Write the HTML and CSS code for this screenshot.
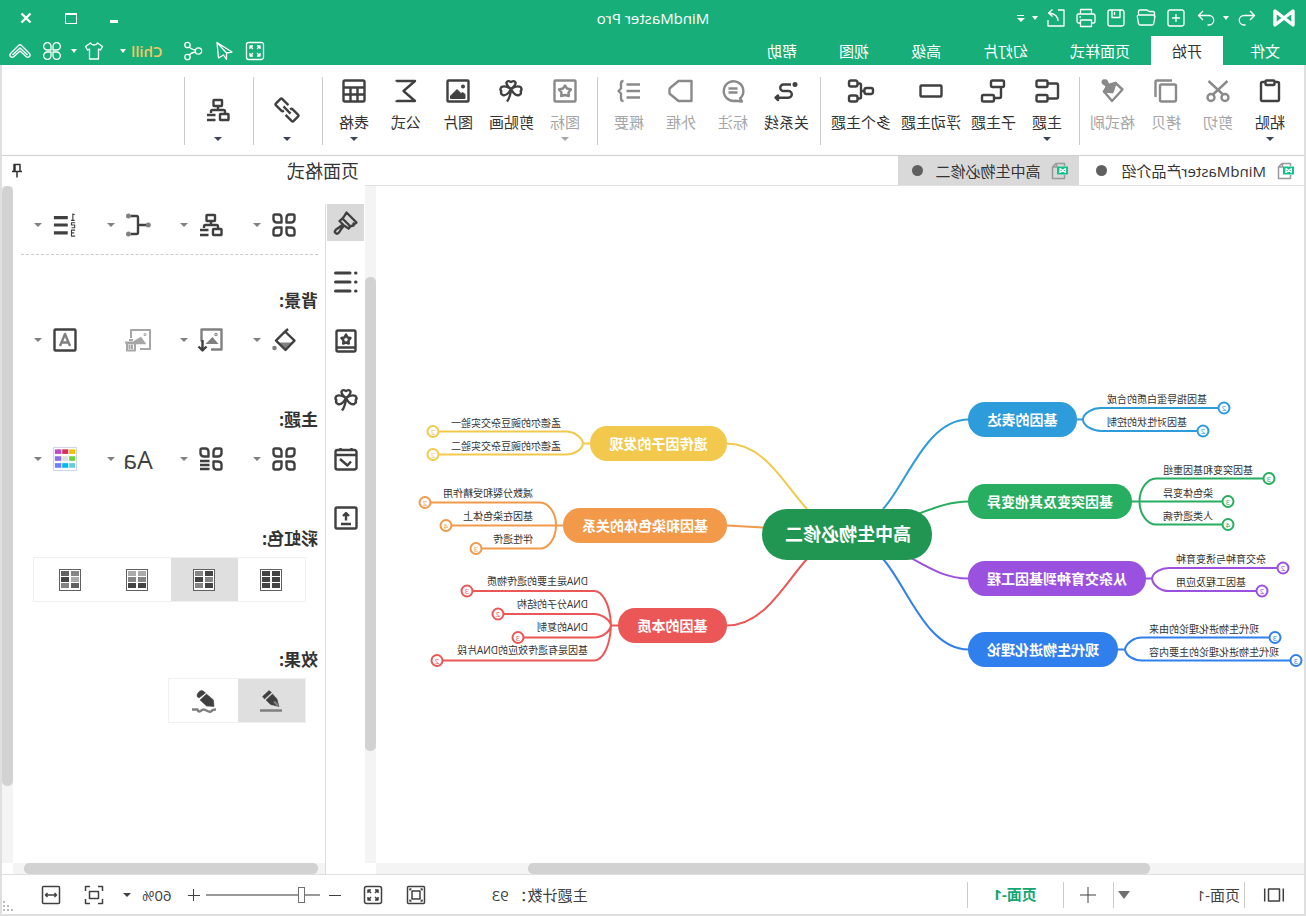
FILE: index.html
```html
<!DOCTYPE html>
<html lang="zh-CN">
<head>
<meta charset="utf-8">
<title>MindMaster Pro</title>
<link rel="stylesheet" href="styles.css">
</head>
<body>
<svg class="sprite" aria-hidden="true">
  <symbol id="logo" viewBox="0 0 22 18"><path d="M2 2v14L20 2v14z" fill="none" stroke="currentColor" stroke-width="3.400" stroke-linejoin="round" stroke-linecap="round"/></symbol>
  <symbol id="undo" viewBox="0 0 20 20"><path d="M7 3L2.500 7.500 7 12M3 7.500h10a4.500 4.500 0 0 1 0 9.500h-1.500"/></symbol>
  <symbol id="redo" viewBox="0 0 20 20"><path d="M13 3l4.500 4.500L13 12M17 7.500H7A4.500 4.500 0 0 0 7 17h1.500"/></symbol>
  <symbol id="new" viewBox="0 0 20 20"><rect x="2" y="2" width="16" height="16" rx="2"/><path d="M10 6v8M6 10h8"/></symbol>
  <symbol id="open" viewBox="0 0 20 20"><path d="M1.500 10V5q0-1.500 1.500-1.500h4l2-1.500h7q1.500 0 1.500 1.500V7M2.500 7H17q2 0 1.700 1.500l-1.200 7q-.3 1.500-2 1.500H4q-1.500 0-1.700-1.500L1 8.500Q1 7 2.500 7z"/></symbol>
  <symbol id="save" viewBox="0 0 20 20"><rect x="2" y="2" width="16" height="16" rx="2"/><path d="M6 2v7.500h8V2M11.500 4v3"/></symbol>
  <symbol id="print" viewBox="0 0 20 20"><path d="M4.500 6V1.500h11V6M4.500 15H2.500Q1 15 1 13.500v-6Q1 6 2.500 6h15Q19 6 19 7.500v6q0 1.500-1.500 1.500h-2M4.500 12h11v6.500h-11zM15 9h1.500"/></symbol>
  <symbol id="export" viewBox="0 0 20 20"><path d="M8 2H2v16h16v-6M8 13q0-7 9-8M13.500 1.500L17.500 5l-4 3.500"/></symbol>
  <symbol id="full" viewBox="0 0 20 20"><rect x="1.500" y="1.500" width="17" height="17" rx="2"/><path d="M5 8V5h3M12 5h3v3M15 12v3h-3M8 15H5v-3M5 5l3 3M15 5l-3 3M15 15l-3-3M5 15l3-3"/></symbol>
  <symbol id="send" viewBox="0 0 20 20"><path d="M17 1.500L2 11l5.500 1v6.500l3-4.500 5 3zM17 1.500L7.500 12"/></symbol>
  <symbol id="share" viewBox="0 0 20 20"><circle cx="4.500" cy="10" r="3.200"/><circle cx="15.500" cy="4" r="2.700"/><circle cx="15.500" cy="16" r="2.700"/><path d="M7.500 9q5-1 6-3M7.500 11q5 1 6 3"/></symbol>
  <symbol id="shirt" viewBox="0 0 20 20"><path d="M6.500 2L1.500 5.500 3.500 9 5.500 8v10h9V8l2 1 2-3.500L13.500 2q-1 2-3.500 2T6.500 2z"/></symbol>
  <symbol id="four" viewBox="0 0 20 20"><path d="M9 9H5.500A3.700 3.700 0 1 1 9 5.500zM11 9h3.500A3.700 3.700 0 1 0 11 5.500zM9 11H5.500A3.700 3.700 0 1 0 9 14.500zM11 11h3.500a3.700 3.700 0 1 1-3.500 3.500z"/></symbol>
  <symbol id="fold" viewBox="0 0 22 16"><path d="M2 10l7.500-7.500q1.500-1.500 3 0L20 10q2 2 .5 3.500t-3.500 0L11 8l-6 5.500q-2 1.500-3.500 0T2 10zM3.500 12L11 5l7.500 7"/></symbol>

  <symbol id="paste" viewBox="0 0 24 24"><path d="M8 3H4.500Q3 3 3 4.500v16Q3 22 4.500 22h15q1.500 0 1.500-1.500v-16Q21 3 19.500 3H16"/><rect x="7.500" y="1.500" width="9" height="4.500" rx="1"/></symbol>
  <symbol id="cut" viewBox="0 0 24 24"><circle cx="5" cy="18.500" r="3.500"/><circle cx="19" cy="18.500" r="3.500"/><path d="M2.500 2L17 15.500M21.500 2L7 15.500"/></symbol>
  <symbol id="copy" viewBox="0 0 24 24"><rect x="2" y="5.500" width="16" height="17" rx="1.500"/><path d="M22.500 18V3q0-1.500-1.500-1.500H6"/></symbol>
  <symbol id="painter" viewBox="0 0 24 24"><path d="M8.500 4L1.500 10.500 12 22l8-9.500z"/><path class="solid" d="M8.500 4l3 9 8.500-.5-3-5.500 4-3q1-2-1-2.500t-2.500.5l-2 4z"/></symbol>
  <symbol id="topic" viewBox="0 0 24 24"><rect x="11.500" y="1.500" width="11" height="6.500" rx="1.500"/><rect x="11.500" y="16" width="11" height="6.500" rx="1.500"/><path d="M11.500 4.500H2.500Q1 4.500 1 6v12q0 1.500 1.500 1.500h9"/></symbol>
  <symbol id="subtopic" viewBox="0 0 24 24"><rect x="1" y="1.500" width="13" height="6.500" rx="1.500"/><rect x="11" y="16" width="12" height="6.500" rx="1.500"/><path d="M4 8v9.500q0 1.500 1.500 1.500H11"/></symbol>
  <symbol id="float" viewBox="0 0 24 24"><rect x="1.500" y="6.500" width="21" height="11" rx="1"/></symbol>
  <symbol id="multi" viewBox="0 0 26 24"><rect x="1" y="9" width="8.500" height="6" rx="2"/><rect x="16.500" y="1.500" width="8.500" height="6" rx="2"/><rect x="16.500" y="16.500" width="8.500" height="6" rx="2"/><path d="M9.500 12H13M16.500 4.500h-2Q13 4.500 13 6v12q0 1.500 1.500 1.500h2"/></symbol>
  <symbol id="relation" viewBox="0 0 24 24"><path d="M7 5.500h7.500a3.200 3.200 0 0 1 0 6.500h-5a3.300 3.300 0 0 0 0 6.700H19"/><circle class="solid" cx="3" cy="5.500" r="1.300"/><path class="solid" d="M20 16.500v4.500l2.500-2.300z"/></symbol>
  <symbol id="note" viewBox="0 0 24 24"><path d="M5 19.500A9.800 9.800 0 1 1 10 21.800L3 22.500z"/><path d="M7.500 9.500h9M7.500 13.500h9"/></symbol>
  <symbol id="frame" viewBox="0 0 24 24"><path d="M1.500 2h13l8.500 7q.5.500.5 1v4q0 .5-.5 1l-8.500 7h-13z"/></symbol>
  <symbol id="summary" viewBox="0 0 24 24"><path d="M1 5.500h13.500M1 12h13.500M1 18.500h13.500M17.500 2q2.500 0 2.500 2.500v5L22.500 12 20 14.500v5q0 2.500-2.500 2.500"/></symbol>
  <symbol id="stamp" viewBox="0 0 24 24"><rect x="1.500" y="1.500" width="21" height="21" rx="1"/><path d="M12 6.500l2 3 4 1-2.500 3 .3 3.500-3.800-1-3.800 1 .3-3.500L6 10.500l4-1z"/></symbol>
  <symbol id="clover" viewBox="0 0 24 24"><path d="M12 10Q7 6 7.500 3.500 8.500 1 12 3q3.500-2 4.500.5Q17 6 12 10zM12 10q6-4 9.500-2 2 2.500.2 4 1 3-1.500 4Q16 17.500 12 10zM12 10Q6 6 2.500 8q-2 2.500-.2 4-1 3 1.500 4Q8 17.500 12 10zM12 10q.5 8 4 12.500"/></symbol>
  <symbol id="picture" viewBox="0 0 24 24"><rect x="1.500" y="1.500" width="21" height="21" rx="1"/><path class="solid" d="M5 19.500v-4l2-2 2 1 4-4 6.500 6.500v2.500z" stroke-width="1"/><circle class="solid" cx="7" cy="7.500" r=".8"/></symbol>
  <symbol id="sigma" viewBox="0 0 24 24"><path d="M21.500 2.500V2H3l11.500 10L3 22h18.500v-.5"/></symbol>
  <symbol id="table" viewBox="0 0 24 24"><rect x="1.500" y="1.500" width="21" height="21" rx="1.500"/><path d="M2 8.500h20M2 15.500h20M8.500 8.500V22M15.500 8.500V22"/></symbol>
  <symbol id="link" viewBox="0 0 24 24"><g transform="rotate(-45 12 12)"><path d="M9.500 16.500H1q-1.500 0-1.500-1.500V9Q-.5 7.500 1 7.500h7.500q1.500 0 1.500 2M14.500 7.500H23q1.500 0 1.500 1.500v6q0 1.500-1.500 1.500h-7.500q-1.500 0-1.500-2M7 12h10"/></g></symbol>
  <symbol id="tree" viewBox="0 0 24 24"><rect x="8" y="2" width="8.500" height="6" rx=".5"/><path d="M12 8V12M5 15v-1.500Q5 12 6.500 12h11q1.500 0 1.500 1.500V15M14.500 17H23M14.500 22H23"/><rect x="1.500" y="16" width="8.500" height="6" rx=".5"/></symbol>

  <symbol id="leaves" viewBox="0 0 24 24"><path d="M1.500 3q0-1.500 1.500-1.500h4Q9.500 2 9.500 5v4.500H5Q2 9.500 1.500 6.500zM22.500 3q0-1.500-1.500-1.500h-4q-2.500.5-2.500 3.500v4.500H19q3 0 3.500-3zM1.500 17q.5-2.500 3.500-2.500h4.500V19q0 3-2.500 3.500H3Q1.500 22.500 1.500 21zM22.500 17q-.5-2.500-3.500-2.500h-4.500V19q0 3 2.500 3.500h4q1.500 0 1.500-1.500z"/></symbol>
  <symbol id="leaves3" viewBox="0 0 24 24"><path d="M1.500 3q0-1.500 1.500-1.500h4Q9.500 2 9.500 5v4.500H5Q2 9.500 1.500 6.500zM22.500 3q0-1.500-1.500-1.500h-4q-2.500.5-2.500 3.500v4.500H19q3 0 3.500-3zM1.500 17q.5-2.500 3.500-2.500h4.500V19q0 3-2.500 3.500H3Q1.500 22.500 1.500 21zM13.500 14H23M13.500 18H23M13.500 22H23"/></symbol>
  <symbol id="bracket" viewBox="0 0 26 24"><path d="M4 12h8M20 3h-5.500Q13 3 13 4.500v15q0 1.500 1.500 1.500H20"/><g class="dim"><circle class="dimdot" cx="2.700" cy="12" r="2.500"/><circle class="dimdot" cx="22.500" cy="3" r="2.500"/><circle class="dimdot" cx="22.500" cy="21" r="2.500"/></g></symbol>
  <symbol id="numbers" viewBox="0 0 26 26"><path d="M10 5h15M10 13h15M10 21.500h15" stroke-width="3.500"/><path d="M2.500 2L4.500 1v6.500M2.500 8h4M2 10.500h4v2.500H2.500v3H6M2 18.500h4v6.500H2M3 21.500h3" stroke-width="1.200"/></symbol>
  <symbol id="bucket" viewBox="0 0 24 24"><path class="dimfill" d="M3.500 14.500h14.500l-7 7.500z"/><path d="M8 1l5 4.500M11 3.500l9 9.200-9.500 9.300-9-9.300z"/><circle class="dimfill" cx="21.500" cy="20" r="2.300"/></symbol>
  <symbol id="import" viewBox="0 0 26 24"><g class="dim"><path d="M13 21.500H2.500v-20h20v12"/><path class="dimfill" d="M5.500 16l6-7 7 7z"/><circle cx="8" cy="6.500" r=".5"/></g><path d="M21.500 12v10M17.500 18.500l4 4 4-4"/></symbol>
  <symbol id="clear" viewBox="0 0 28 24"><path d="M12 21H2V2h19v8"/><path class="solid" d="M6 16l5-7 7 4v3z" stroke-width=".5"/><circle cx="7" cy="6.500" r=".5"/><path d="M15 14.500h12M19 12h4M17 15.500h8v7h-8zM20 17v4M22.500 17v4"/></symbol>
  <symbol id="letter" viewBox="0 0 24 24"><rect x="1.500" y="1.500" width="21" height="21" rx="1"/><path class="dim" d="M7 18l5-12 5 12M9 14.500h6"/></symbol>
  <symbol id="palette" viewBox="0 0 26 26"><path d="M.5.500h25v25H.5z" fill="#fff" stroke="#c9cfe4" stroke-width="1"/><g stroke="none"><path fill="#f2c200" d="M2 2.500h6.500v5H2z"/><path fill="#db2d55" d="M9.500 2.500H16v5H9.500z"/><path fill="#c24bc8" d="M17 2.500h7v5h-7z"/><path fill="#6fcf3f" d="M2 10h6.500v5H2z"/><path fill="#ddd" d="M9.500 10H16v5H9.500z"/><path fill="#8f6ee8" d="M17 10h7v5h-7z"/><path fill="#64cdd8" d="M2 17.500h6.500v5H2z"/><path fill="#00b8f5" d="M9.500 17.500H16v5H9.500z"/><path fill="#6f80ff" d="M17 17.500h7v5h-7z"/></g></symbol>
  <symbol id="brush" viewBox="0 0 24 24"><path d="M11.500 1.500L1.500 11.500l2 1.500 1-.5v2q3 0 5 3L14 14.500q3 3.500 5 7 2 2 3.500.5t-.5-3.500q-3.500-2-7-5l3.500-3.500q-3.500-2-7-8.500zM15.500 7.500l-8 8"/></symbol>
  <symbol id="list" viewBox="0 0 24 24"><path d="M8 3h14.500M8 12h14.500M8 21h14.500" stroke-width="3" stroke-linecap="round"/><path d="M2 3h.5M2 12h.5M2 21h.5" stroke-width="3" stroke-linecap="round"/></symbol>
  <symbol id="book" viewBox="0 0 24 24"><rect x="2.500" y="1.500" width="19" height="21" rx="1.500"/><path d="M2.500 18.500h19M12 5.500l1.500 3 3 .5-2 2.500.3 3-2.800-1-2.800 1 .3-3L7.500 9l3-.5z"/></symbol>
  <symbol id="calendar" viewBox="0 0 24 24"><rect x="1.500" y="3" width="21" height="19.500" rx="2"/><path d="M1.500 8h21M6.500 1v3M17.500 1v3M7 14.500l3.500 4 7.500-6.500"/></symbol>
  <symbol id="upload" viewBox="0 0 24 24"><rect x="1.500" y="1.500" width="21" height="21" rx="1.500"/><path d="M7 18h10M12 14.500V8M9 10l3-3 3 3"/></symbol>
  <symbol id="pen" viewBox="0 0 24 24"><path class="solid" d="M14 1.500l6.500 6-2 2.500-7-6.500zM10.500 5l6.500 6-4.500 4.500-8.500 2 2-7.500z" stroke-width=".5"/><path class="dim" d="M1 21.500h22M5 16.500l4-4"/></symbol>
  <symbol id="pencil" viewBox="0 0 26 24"><path class="solid" d="M13 2.500q2.500-2 5 .2t2 4.800l-2 1.500-6.500-5zM10.500 5l6.500 6-6.500 6-7.500.5.500-6.500z" stroke-width=".5"/><path class="dim" d="M1 20.500q3.500 0 4.500 1.500t4 0 4-1.500 3 1.500 3-1.500h5.500"/></symbol>
  <symbol id="pin" viewBox="0 0 12 16"><path d="M3 1.500h6v7H3zM1 8.500h10M6 9v5.500M8 1.500V8" stroke-width="1.500"/></symbol>
  <symbol id="file" viewBox="0 0 18 18"><path d="M4.500 4V1.500H13L16.500 5v11.500h-12V13M4.500 16.500H9M12.500 1.500V5h4" stroke="#999" stroke-width="1.500"/><path d="M1 4.500h11v8H1z" fill="#11c28a" stroke="none"/><path d="M3.500 10.500v-4l5.500 4v-4z" stroke="#fff" stroke-width="1.200"/></symbol>
  <symbol id="pages" viewBox="0 0 20 16"><path d="M.7 1.500v13M19.300 1.500v13M4.500 2h11v12h-11z"/></symbol>
  <symbol id="fitpage" viewBox="0 0 20 20"><rect x="1.500" y="1.500" width="17" height="17" rx="1"/><path d="M6 6h8v8H6zM4 5.500V4h1.500M14.500 4H16v1.500M16 14.500V16h-1.500M5.500 16H4v-1.500"/></symbol>
  <symbol id="focus" viewBox="0 0 20 20"><path d="M5.500 6.500h9v7h-9zM1.500 6V1.500H6M14 1.500h4.500V6M18.500 14v4.500H14M6 18.500H1.500V14"/></symbol>
  <symbol id="fitwidth" viewBox="0 0 20 20"><rect x="1.500" y="1.500" width="17" height="17" rx="1"/><path d="M4.500 10h11M6.500 8l-2 2 2 2M13.500 8l2 2-2 2"/></symbol>
</svg>

<div class="app">
  <header class="titlebar">
    <div class="quick">
      <svg class="logo"><use href="#logo"/></svg>
      <button class="plain q-undo" aria-label="撤销"><svg class="i20"><use href="#undo"/></svg></button>
      <i class="caret"></i>
      <button class="plain" aria-label="重做"><svg class="i20"><use href="#redo"/></svg></button>
      <button class="plain" aria-label="新建"><svg class="i20"><use href="#new"/></svg></button>
      <button class="plain" aria-label="打开"><svg class="i20"><use href="#open"/></svg></button>
      <button class="plain" aria-label="保存"><svg class="i20"><use href="#save"/></svg></button>
      <button class="plain" aria-label="打印"><svg class="i20"><use href="#print"/></svg></button>
      <button class="plain" aria-label="导出"><svg class="i20"><use href="#export"/></svg></button>
      <i class="caret"></i>
      <button class="plain more" aria-label="更多"><i class="caret"></i></button>
    </div>
    <h1>MindMaster Pro</h1>
    <div class="window">
      <button class="plain min" aria-label="最小化"><i></i></button>
      <button class="plain max" aria-label="最大化"><i></i></button>
      <button class="plain" aria-label="关闭"><svg class="close" viewBox="0 0 12 12"><path d="M1.500 1.500l9 9M10.500 1.500l-9 9"/></svg></button>
    </div>
  </header>

  <nav class="menubar">
    <div class="menus">
      <button class="menu first">文件</button>
      <button class="menu active">开始</button>
      <button class="menu">页面样式</button>
      <button class="menu">幻灯片</button>
      <button class="menu">高级</button>
      <button class="menu">视图</button>
      <button class="menu">帮助</button>
    </div>
    <div class="account">
      <button class="plain" aria-label="全屏"><svg class="i20"><use href="#full"/></svg></button>
      <button class="plain" aria-label="发送"><svg class="i20"><use href="#send"/></svg></button>
      <button class="plain" aria-label="分享"><svg class="i20"><use href="#share"/></svg></button>
      <button class="plain user">Chill<i class="caret"></i></button>
      <button class="plain pair" aria-label="皮肤"><svg class="i20"><use href="#shirt"/></svg><i class="caret"></i></button>
      <button class="plain" aria-label="应用"><svg class="i20"><use href="#four"/></svg></button>
      <button class="plain" aria-label="折叠"><svg class="foldicon"><use href="#fold"/></svg></button>
    </div>
  </nav>

  <div class="workspace">
    <div class="ribbon">
      <div class="group">
        <button class="tool"><svg><use href="#paste"/></svg><span>粘贴</span><i class="caret"></i></button>
        <button class="tool off"><svg><use href="#cut"/></svg><span>剪切</span></button>
        <button class="tool off"><svg><use href="#copy"/></svg><span>拷贝</span></button>
        <button class="tool off"><svg><use href="#painter"/></svg><span>格式刷</span></button>
      </div>
      <div class="group">
        <button class="tool"><svg><use href="#topic"/></svg><span>主题</span><i class="caret"></i></button>
        <button class="tool"><svg><use href="#subtopic"/></svg><span>子主题</span></button>
        <button class="tool"><svg><use href="#float"/></svg><span>浮动主题</span></button>
        <button class="tool"><svg class="w26"><use href="#multi"/></svg><span>多个主题</span></button>
      </div>
      <div class="group">
        <button class="tool"><svg><use href="#relation"/></svg><span>关系线</span></button>
        <button class="tool off"><svg><use href="#note"/></svg><span>标注</span></button>
        <button class="tool off"><svg><use href="#frame"/></svg><span>外框</span></button>
        <button class="tool off"><svg><use href="#summary"/></svg><span>概要</span></button>
      </div>
      <div class="group">
        <button class="tool off"><svg><use href="#stamp"/></svg><span>图标</span><i class="caret"></i></button>
        <button class="tool"><svg><use href="#clover"/></svg><span>剪贴画</span></button>
        <button class="tool"><svg><use href="#picture"/></svg><span>图片</span></button>
        <button class="tool"><svg><use href="#sigma"/></svg><span>公式</span></button>
        <button class="tool"><svg><use href="#table"/></svg><span>表格</span><i class="caret"></i></button>
      </div>
      <div class="group">
        <button class="tool big" aria-label="链接"><svg><use href="#link"/></svg><i class="caret"></i></button>
      </div>
      <div class="group">
        <button class="tool big" aria-label="布局"><svg><use href="#tree"/></svg><i class="caret"></i></button>
      </div>
    </div>

    <div class="main">
      <section class="editor">
        <div class="tabs">
          <button class="tab"><svg class="i18"><use href="#file"/></svg><span>MindMaster产品介绍</span><i class="dot"></i></button>
          <button class="tab current"><svg class="i18"><use href="#file"/></svg><span>高中生物必修二</span><i class="dot"></i></button>
        </div>
        <div class="board">
          <svg class="map" width="928" height="677" viewBox="2 186 928 677">
            <g class="branch blue">
              <path d="M337.500 419.500C380 419.500 400 485 423 509M229 419.500h-6M223 419.500C223 413 213 408 205 408H88M223 419.500C223 426 213 431 205 431H109"/>
              <circle cx="82" cy="408" r="5.500"/><circle cx="103" cy="431" r="5.500"/>
              <rect x="229" y="402" width="109" height="35" rx="17"/>
              <text class="node" x="283.500" y="425">基因的表达</text>
              <g class="left"><text x="199" y="403">基因指导蛋白质的合成</text><text x="199" y="426">基因对性状的控制</text></g>
              <text class="count" x="82" y="411">2</text><text class="count" x="103" y="434">2</text>
            </g>
            <g class="branch green">
              <path d="M337.500 501.500C355 501.500 370 507 388 514M175 501.500H84M166.500 501.500C166.500 488 158 478.500 150 478.500H43M166.500 501.500C166.500 515 158 524.500 150 524.500H84"/>
              <circle cx="37" cy="478.500" r="5.500"/><circle cx="78" cy="501.500" r="5.500"/><circle cx="78" cy="524.500" r="5.500"/>
              <rect x="174" y="484" width="164" height="35" rx="17"/>
              <text class="node" x="256" y="507">基因突变及其他变异</text>
              <g class="left"><text x="143" y="474">基因突变和基因重组</text><text x="143" y="497">染色体变异</text><text x="143" y="520">人类遗传病</text></g>
              <text class="count" x="37" y="481.500">3</text><text class="count" x="78" y="504.500">3</text><text class="count" x="78" y="527.500">4</text>
            </g>
            <g class="branch purple">
              <path d="M337.500 578.500C360 578.500 377 568 395 558M161 578.500h-7M154 578.500C153 572 145 568 137 568H29M154 578.500C153 586 145 591 137 591H50"/>
              <circle cx="23" cy="568" r="5.500"/><circle cx="44" cy="591" r="5.500"/>
              <rect x="160" y="561" width="178" height="35" rx="17"/>
              <text class="node" x="249" y="584">从杂交育种到基因工程</text>
              <g class="left"><text x="130" y="563">杂交育种与诱变育种</text><text x="130" y="586">基因工程及应用</text></g>
              <text class="count" x="23" y="571">2</text><text class="count" x="44" y="594">2</text>
            </g>
            <g class="branch navy">
              <path d="M337.500 649.500C380 649.500 400 584 423 559M188 649.500h-7M181 649.500C180 643 172 637.500 164 637.500H37M181 649.500C180 656 172 660.500 164 660.500H16"/>
              <circle cx="31" cy="637.500" r="5.500"/><circle cx="10" cy="660.500" r="5.500"/>
              <rect x="188" y="632" width="150" height="35" rx="17"/>
              <text class="node" x="263" y="655">现代生物进化理论</text>
              <g class="left"><text x="157" y="633">现代生物进化理论的由来</text><text x="157" y="656">现代生物进化理论的主要内容</text></g>
              <text class="count" x="31" y="640.500">3</text><text class="count" x="10" y="663.500">3</text>
            </g>
            <g class="branch yellow">
              <path d="M579 443.500C542 443.500 522 484 499 509M716 443.500h7M723 443.500C724 437 732 431.500 740 431.500H867M723 443.500C724 450 732 454.500 740 454.500H867"/>
              <circle cx="873" cy="431.500" r="5.500"/><circle cx="873" cy="454.500" r="5.500"/>
              <rect x="579" y="426" width="137" height="35" rx="17"/>
              <text class="node" x="647.500" y="449">遗传因子的发现</text>
              <g><text x="745" y="427">孟德尔的豌豆杂交实验一</text><text x="745" y="450">孟德尔的豌豆杂交实验二</text></g>
              <text class="count" x="873" y="434.500">2</text><text class="count" x="873" y="457.500">2</text>
            </g>
            <g class="branch orange">
              <path d="M579 525.500L543 527.500M743 525.500H854M750 525.500C750 512 758 502.500 766 502.500H875M750 525.500C750 539 758 548.500 766 548.500H824"/>
              <circle cx="881" cy="502.500" r="5.500"/><circle cx="860" cy="525.500" r="5.500"/><circle cx="830" cy="548.500" r="5.500"/>
              <rect x="579" y="508" width="164" height="35" rx="17"/>
              <text class="node" x="661" y="531">基因和染色体的关系</text>
              <g><text x="773" y="497">减数分裂和受精作用</text><text x="773" y="520">基因在染色体上</text><text x="773" y="543">伴性遗传</text></g>
              <text class="count" x="881" y="505.500">2</text><text class="count" x="860" y="528.500">4</text><text class="count" x="830" y="551.500">3</text>
            </g>
            <g class="branch red">
              <path d="M579 625.500C542 625.500 522 584 499 559M688 625.500h7M695 625.500C696 603 704 591 712 591H833M695 625.500C696 620 704 614 712 614H802M695 625.500C696 632 704 637.500 712 637.500H782M695 625.500C696 648 704 660.500 712 660.500H863"/>
              <circle cx="839" cy="591" r="5.500"/><circle cx="808" cy="614" r="5.500"/><circle cx="788" cy="637.500" r="5.500"/><circle cx="869" cy="660.500" r="5.500"/>
              <rect x="579" y="608" width="109" height="35" rx="17"/>
              <text class="node" x="633.500" y="631">基因的本质</text>
              <g><text x="718" y="585">DNA是主要的遗传物质</text><text x="718" y="608">DNA分子的结构</text><text x="718" y="631">DNA的复制</text><text x="718" y="654">基因是有遗传效应的DNA片段</text></g>
              <text class="count" x="839" y="594">3</text><text class="count" x="808" y="617">2</text><text class="count" x="788" y="640.500">3</text><text class="count" x="869" y="663.500">2</text>
            </g>
            <rect x="374" y="509" width="170" height="51" rx="25" fill="#219653"/>
            <text class="root" x="458" y="541">高中生物必修二</text>
          </svg>
          <div class="vbar"><i class="canvas-v"></i></div>
          <div class="hbar"><i class="canvas-h"></i></div>
        </div>
      </section>

      <aside class="side">
        <div class="side-head"><h2>页面格式</h2><button class="plain" aria-label="固定"><svg class="pin"><use href="#pin"/></svg></button></div>
        <div class="side-body">
          <div class="rail">
            <button class="plain on" aria-label="格式"><svg><use href="#brush"/></svg></button>
            <button class="plain" aria-label="大纲"><svg><use href="#list"/></svg></button>
            <button class="plain" aria-label="图标"><svg><use href="#book"/></svg></button>
            <button class="plain" aria-label="剪贴画"><svg><use href="#clover"/></svg></button>
            <button class="plain" aria-label="任务"><svg><use href="#calendar"/></svg></button>
            <button class="plain" aria-label="上传"><svg><use href="#upload"/></svg></button>
          </div>
          <div class="panel">
            <div class="props">
              <div class="row top">
                <button class="plain pick" aria-label="布局样式"><svg><use href="#leaves"/></svg><i class="caret"></i></button>
                <button class="plain pick" aria-label="结构"><svg><use href="#tree"/></svg><i class="caret"></i></button>
                <button class="plain pick" aria-label="连线"><svg class="w26"><use href="#bracket"/></svg><i class="caret"></i></button>
                <button class="plain pick" aria-label="编号"><svg class="w26"><use href="#numbers"/></svg><i class="caret"></i></button>
              </div>
              <h3>背景:</h3>
              <div class="row">
                <button class="plain pick" aria-label="填充"><svg><use href="#bucket"/></svg><i class="caret"></i></button>
                <button class="plain pick" aria-label="插入图片"><svg class="w26"><use href="#import"/></svg><i class="caret"></i></button>
                <button class="plain pick faint" aria-label="清除图片"><svg class="w28"><use href="#clear"/></svg></button>
                <button class="plain pick" aria-label="水印"><svg><use href="#letter"/></svg><i class="caret"></i></button>
              </div>
              <h3>主题:</h3>
              <div class="row">
                <button class="plain pick" aria-label="主题"><svg><use href="#leaves"/></svg><i class="caret"></i></button>
                <button class="plain pick" aria-label="主题样式"><svg><use href="#leaves3"/></svg><i class="caret"></i></button>
                <button class="plain pick font"><span>Aa</span><i class="caret"></i></button>
                <button class="plain pick" aria-label="颜色"><svg class="w26"><use href="#palette"/></svg><i class="caret"></i></button>
              </div>
              <h3>彩虹色:</h3>
              <div class="segments wide">
                <button class="plain" aria-label="彩虹色一"><span class="swatch"><i class="d"></i><i class="d"></i><i class="d"></i><i class="d"></i><i class="d"></i><i class="d"></i></span></button>
                <button class="plain on" aria-label="彩虹色二"><span class="swatch"><i class="d"></i><i class="m"></i><i class="m"></i><i class="d"></i><i class="d"></i><i class="m"></i></span></button>
                <button class="plain" aria-label="彩虹色三"><span class="swatch"><i class="l"></i><i class="l"></i><i class="m"></i><i class="m"></i><i class="d"></i><i class="d"></i></span></button>
                <button class="plain" aria-label="彩虹色四"><span class="swatch"><i class="m"></i><i class="k"></i><i class="l"></i><i class="d"></i><i class="k"></i><i class="m"></i></span></button>
              </div>
              <h3 class="effect">效果:</h3>
              <div class="segments">
                <button class="plain on" aria-label="普通"><svg><use href="#pen"/></svg></button>
                <button class="plain" aria-label="手绘"><svg class="w26"><use href="#pencil"/></svg></button>
              </div>
            </div>
            <div class="vbar"><i class="panel-v"></i></div>
            <div class="hbar"><i class="panel-h"></i></div>
          </div>
        </div>
      </aside>
    </div>

    <footer class="status">
      <div class="pages">
        <button class="plain pageicon" aria-label="页面列表"><svg class="i20 short"><use href="#pages"/></svg></button>
        <button class="plain pagename">页面-1</button>
        <i class="caret"></i>
        <button class="plain add" aria-label="新建页面">
          <svg class="i18" viewBox="0 0 18 18"><path d="M9 1v16M1 9h16"/></svg>
        </button>
        <button class="plain pagetab">页面-1</button>
      </div>
      <div class="zoom">
        <span class="total">主题计数： 93</span>
        <button class="plain" aria-label="适合页面"><svg class="i20"><use href="#fitpage"/></svg></button>
        <button class="plain" aria-label="全屏"><svg class="i20"><use href="#full"/></svg></button>
        <button class="plain step" aria-label="缩小"><svg class="i14" viewBox="0 0 14 14"><path d="M1 7.500h12"/></svg></button>
        <input type="range" min="0" max="100" value="14" aria-label="缩放">
        <button class="plain step" aria-label="放大"><svg class="i14" viewBox="0 0 14 14"><path d="M1 7.500h12M7.500 1v12"/></svg></button>
        <span class="percent">60%</span><i class="caret"></i>
        <button class="plain focus" aria-label="聚焦"><svg class="i20"><use href="#focus"/></svg></button>
        <button class="plain" aria-label="适合宽度"><svg class="i20"><use href="#fitwidth"/></svg></button>
        <svg class="grip" viewBox="0 0 12 12"><path d="M9 0h2v2H9zM9 4h2v2H9zM5 4h2v2H5zM9 8h2v2H9zM5 8h2v2H5zM1 8h2v2H1z"/></svg>
      </div>
    </footer>
  </div>
</div>
</body>
</html>
```

FILE: styles.css
```css
* { box-sizing: border-box; }
body {
  margin: 0;
  overflow: hidden;
  color: #333;
  font: 15px/20px "Open Sans", "Noto Sans CJK SC", sans-serif;
}
button { font: inherit; color: inherit; border: 0; padding: 0; background: none; }
h1, h2, h3 { margin: 0; font-weight: normal; }
svg { display: block; flex: none; width: 24px; height: 24px; fill: none; stroke: currentColor; stroke-width: 2.400; stroke-linejoin: round; }
svg, symbol { overflow: visible; }
.sprite { position: absolute; width: 0; height: 0; overflow: hidden; }
.solid { fill: currentColor; }
.dim { stroke: #808080; }
.dimfill, .dimdot { fill: #808080; stroke: none; }
svg.i14 { width: 14px; height: 14px; stroke-width: 1; }
svg.i18 { width: 18px; height: 18px; }
svg.i20 { width: 20px; height: 20px; stroke-width: 1.500; }
svg.w26 { width: 26px; }
svg.w28 { width: 28px; stroke-width: 2; }
.plain { display: flex; align-items: center; justify-content: center; }
.caret { display: block; flex: none; width: 0; height: 0; border: 4px solid transparent; border-top-color: currentColor; border-bottom: 0; }

.app { display: flex; flex-direction: column; height: 100vh; transform: scaleX(-1); background: #fff; }

.titlebar { display: grid; grid-template-columns: 1fr auto 1fr; align-items: center; height: 36px; background: #17ae79; color: #fff; }
.titlebar h1 { font-size: 15px; line-height: 36px; }
.quick { display: flex; align-items: center; gap: 10px; padding-left: 11px; }
.quick svg.i20 { stroke-width: 1.300; }
.quick .caret { margin: 0 -3px 0 -2px; border-width: 4px 3px 0; }
svg.logo { width: 22px; height: 18px; }
.q-undo { margin-left: 6px; }
.more { flex-direction: column; gap: 2px; }
.more::before { content: ""; width: 7px; height: 1px; background: #fff; }
.quick .more .caret { margin: 0; border-width: 4px 4px 0; }
.window { display: flex; justify-content: flex-end; align-items: center; gap: 32px; padding-right: 20px; }
.min { width: 8px; height: 12px; }
.min i { width: 8px; height: 3px; margin-top: 6px; background: #fff; }
.max i { width: 12px; height: 11px; margin: 0 1px; border: 1px solid #fff; border-top-width: 2px; }
.close { width: 12px; height: 12px; }

.menubar { display: flex; justify-content: space-between; height: 29px; background: #17ae79; color: #fff; }
.menus { display: flex; }
.menu { padding: 0 21px; }
.menu.first { padding: 0 27px 0 26px; }
.menu.active { background: #fff; color: #333; }
.account { display: flex; align-items: center; gap: 11px; padding-right: 9px; }
.account svg, .account svg.i20 { stroke-width: 1.300; }
.user { gap: 5px; margin: 0 5px 0 9px; color: #f5c760; font-weight: 600; }
.user .caret, .pair .caret { border-width: 4px 3px 0; color: #fff; }
.pair { gap: 7px; margin-right: -2px; }
svg.foldicon { width: 22px; height: 16px; }

.workspace { display: flex; flex: 1; flex-direction: column; min-height: 0; border: solid #dfdfdf; border-width: 0 2px 2px; }
.ribbon { display: flex; height: 91px; padding: 12px 0 10px 2px; border-bottom: 1px solid #cfcfcf; }
.group { display: flex; padding: 0 5px 0 6px; border-right: 1px solid #ccc; }
.tool { display: flex; flex-direction: column; align-items: center; min-width: 52px; padding: 2px 5px 0; color: #404040; }
.tool span { margin-top: 9px; color: #333; }
.tool .caret { margin-top: 5px; color: #3d4358; }
.tool.off { color: #8a8a8a; }
.tool.off span, .tool.off .caret { color: #a6a6a6; }
.tool.big { min-width: 57px; padding-top: 21px; }
.tool.big .caret { margin-top: 15px; }

.main { display: flex; flex: 1; min-height: 0; }
.editor { display: flex; flex: 1; flex-direction: column; min-width: 0; }
.tabs { display: flex; height: 30px; border-bottom: 1px solid #e0e0e0; }
.tab { display: flex; align-items: center; padding: 0 17px 0 9px; }
.tab span { margin: 0 14px 0 11px; }
.tab .dot { width: 11px; height: 11px; border-radius: 50%; background: #606060; }
.tab.current { padding: 0 14px 0 10px; background: #d9d9d9; }
.tab.current span { margin-right: 12px; }
.board { display: grid; flex: 1; grid-template: minmax(0, 1fr) 11px / minmax(0, 1fr) 11px; min-height: 0; }
.map { width: 928px; height: 677px; }

.vbar, .hbar { background: #f4f4f4; }
.vbar i, .hbar i { display: block; border-radius: 5px; background: #d2d2d2; }
.canvas-v { height: 70%; margin-top: 91px; }
.canvas-h { height: 11px; width: 67%; margin-left: 154px; }
.panel-v { height: 600px; }
.panel-h { height: 11px; margin: 0 11px 0 7px; }

.branch { fill: currentColor; stroke: none; }
.branch path { fill: none; stroke: currentColor; stroke-width: 2; }
.branch circle { fill: #fff; stroke: currentColor; stroke-width: 2; }
.branch text { fill: #333; font-size: 10px; }
.branch .left text { text-anchor: end; }
.branch .node, .map .root { fill: #fff; font-size: 14px; font-weight: 700; text-anchor: middle; }
.branch .count { fill: currentColor; font-size: 8px; text-anchor: middle; }
.map .root { font-size: 18px; stroke: none; }
.blue { color: #2d9cdb; }
.green { color: #27ae60; }
.purple { color: #9b51e0; }
.navy { color: #2f80ed; }
.yellow { color: #f2c94c; }
.orange { color: #f2994a; }
.red { color: #eb5757; }
.map > rect { stroke: none; }

.side { display: flex; flex-direction: column; width: 363px; }
.side-head { display: flex; align-items: center; justify-content: space-between; height: 30px; padding: 0 9px 0 6px; }
.side-head h2 { font-size: 18px; line-height: 30px; }
.pin { width: 12px; height: 16px; }
.side-body { display: flex; flex: 1; min-height: 0; }
.rail { display: flex; flex-direction: column; gap: 22px; width: 40px; margin-top: 18px; padding-left: 1px; border-right: 1px solid #dcdcdc; color: #404040; }
.rail button { width: 37px; height: 37px; }
.rail svg { margin-right: 1px; }
.rail .on, .segments .on { background: #d9d9d9; }
.panel { display: grid; flex: 1; grid-template: minmax(0, 1fr) 11px / minmax(0, 1fr) 11px; min-width: 0; }
.props { display: flex; flex-direction: column; padding: 21px 8px 0 7px; }
.row { display: grid; grid-template-columns: repeat(4, 73px); height: 36px; color: #404040; }
.row.top { height: 48px; padding-bottom: 12px; margin-bottom: 36px; border-bottom: 1px dashed #ccc; }
.pick { display: grid; grid-template-columns: 38px 8px; justify-items: center; justify-content: start; margin-left: 15px; gap: 4px; }
.pick .caret { color: #808080; }
.pick.faint { color: #a6a6a6; }
.font span { font-size: 25px; }
.props h3 { height: 20px; font-size: 17px; font-weight: 700; line-height: 20px; }
.props h3 + .row { margin: 11px 0 52px; }
.segments { display: flex; align-self: flex-start; height: 45px; margin: 8px 0 0 12px; padding-right: 2px; border: 1px solid #f0f0f0; }
.segments button { width: 67px; }
.segments .on { background: #dfdfdf; }
.segments svg { color: #404040; }
.segments.wide { padding-right: 3px; }
.swatch { display: grid; grid-template-columns: 8px 8px; grid-auto-rows: 5px; gap: 1px 2px; justify-content: center; align-content: center; width: 22px; height: 22px; border: 1px solid #606060; background: #fff; }
.swatch i { background: #444; }
.swatch .m { background: #858585; }
.swatch .l { background: #ababab; }
.swatch .k { background: #606060; }
.props .effect { margin-top: 48px; }

.status { display: flex; justify-content: space-between; align-items: center; height: 40px; border-top: 1px solid #dfdfdf; color: #404040; }
.pages, .zoom { display: flex; align-items: center; }
.pages { height: 26px; }
svg.short { height: 16px; }
.pageicon { width: 60px; height: 26px; border-right: 1px solid #ccc; }
.pagename { margin: 0 67px 0 4px; }
.pages > .caret { border-width: 8px 6px 0; color: #707070; }
.add { width: 51px; height: 26px; margin-left: 4px; border: solid #ccc; border-width: 0 1px; }
.add svg { stroke-width: 1; }
.pagetab { width: 96px; height: 26px; padding-bottom: 2px; border-right: 1px solid #ccc; color: #17a673; font-weight: 700; }
.zoom .total { margin-right: 66px; }
.zoom button + button { margin-left: 23px; }
.zoom .step { margin: 0 8px 0 5px; }
.zoom button + .step { margin-left: 21px; }
.zoom input { appearance: none; width: 114px; height: 18px; margin: 0; background: linear-gradient(#999, #999) center / 100% 2px no-repeat; }
.zoom input::-webkit-slider-thumb { appearance: none; width: 7px; height: 16px; border: 1px solid #707070; background: #fff; }
.percent { margin: 0 11px 0 7px; }
.zoom .focus { margin-left: 19px; }
.grip { align-self: flex-end; width: 12px; height: 12px; margin: 0 0 -8px 27px; fill: #bbb; stroke: none; }
```
